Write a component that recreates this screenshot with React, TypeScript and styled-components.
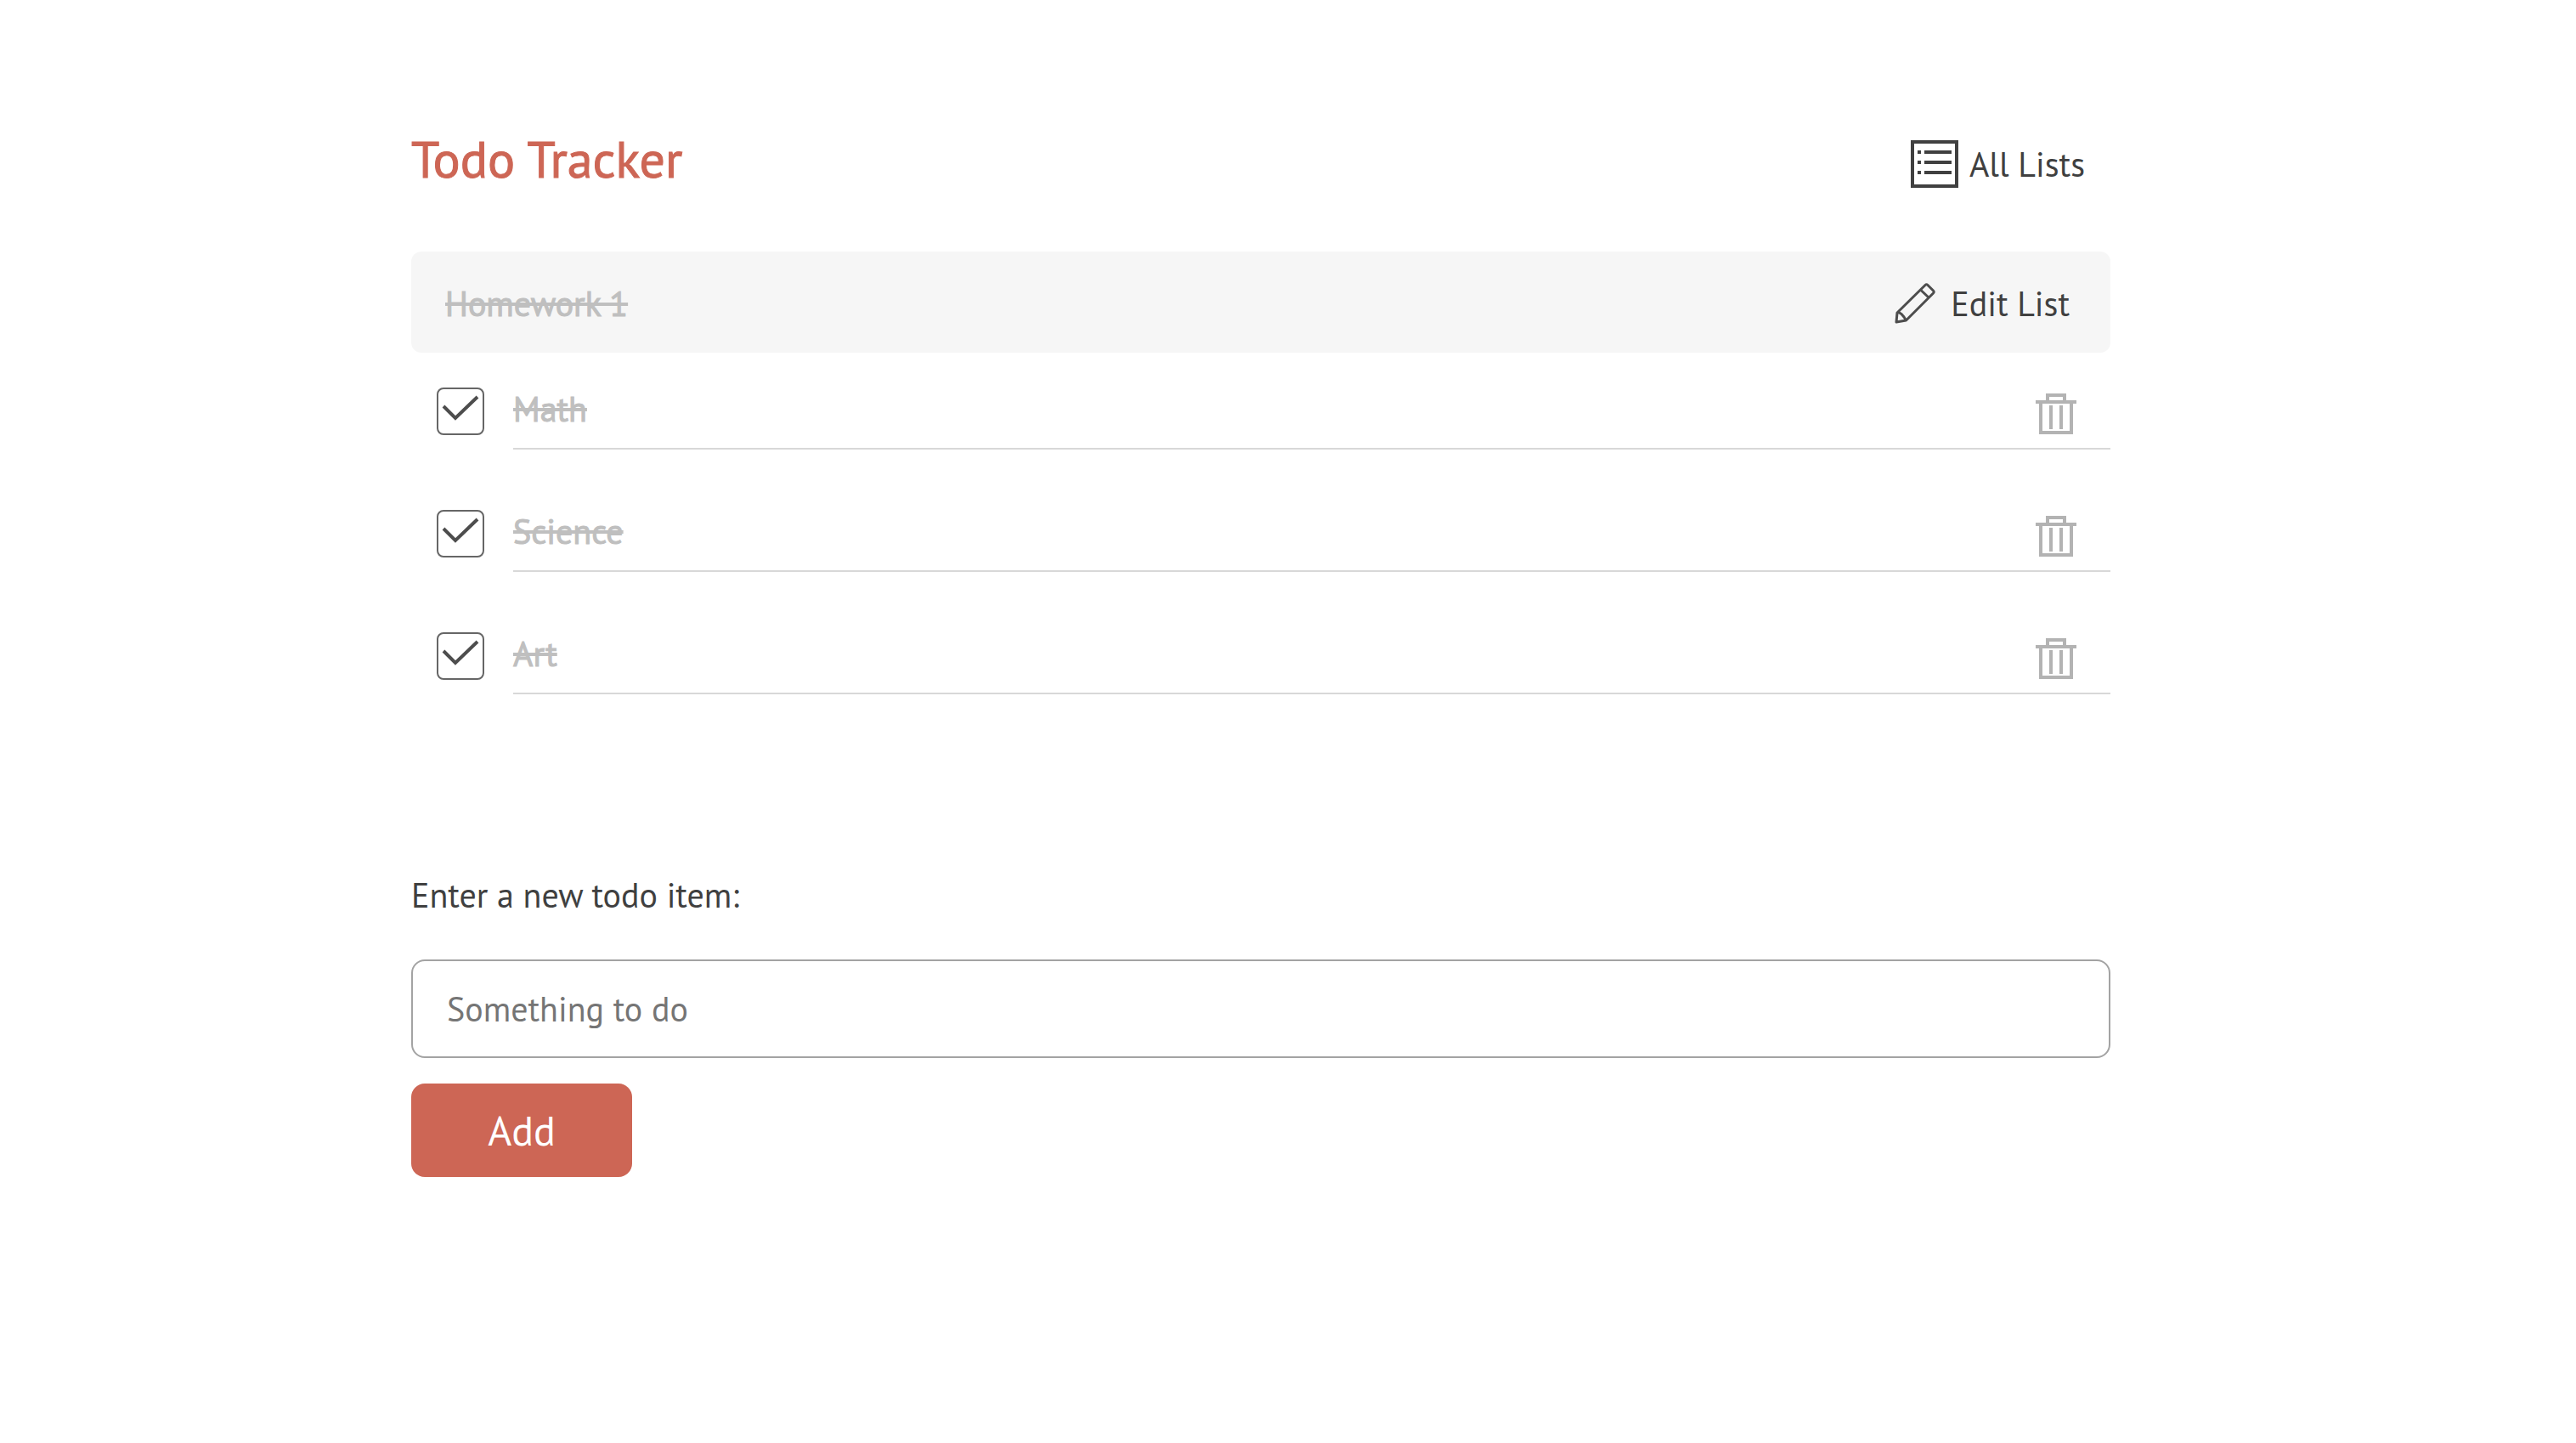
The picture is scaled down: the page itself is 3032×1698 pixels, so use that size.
import React, { useState } from "react";
import styled, { createGlobalStyle } from "styled-components";

const colors = {
  accent: "#cd6655",
  text: "#404040",
  mark: "#4d4d4d",
  done: "#bfbfbf",
  trash: "#b3b3b3",
  line: "#d8d8d8",
  panel: "#f6f6f6",
};

const GlobalStyle = createGlobalStyle`
  *, *::before, *::after { box-sizing: border-box; }
  body {
    margin: 0;
    background: #fff;
    color: ${colors.text};
    font-family: "PT Sans", Lato, "Open Sans", sans-serif;
    font-size: 40px;
    line-height: 56px;
  }
  button, input { font: inherit; color: inherit; }
`;

const Page = styled.div`
  padding: 144px 96px 96px 32px;
`;

const Content = styled.main`
  max-width: 2000px;
  margin: 0 auto;
`;

const Header = styled.header`
  display: flex;
  align-items: center;
  justify-content: space-between;
  height: 98px;
  margin-bottom: 54px;
  padding-right: 30px;
`;

const Title = styled.h1`
  margin: 0;
  padding-bottom: 12px;
  font-size: 60px;
  line-height: 80px;
  font-weight: 500;
  color: ${colors.accent};
  -webkit-text-stroke: 1px currentColor;
`;

const IconLink = styled.a<{ $gap: number }>`
  display: flex;
  align-items: center;
  gap: ${(p) => p.$gap}px;
  color: ${colors.text};
  text-decoration: none;
`;

const Icon = styled.svg<{ $size: number }>`
  display: block;
  flex: none;
  width: ${(p) => p.$size}px;
  height: ${(p) => p.$size}px;
  fill: none;
  stroke: currentColor;
  stroke-width: 4;
`;

const ListBar = styled.section`
  display: flex;
  align-items: center;
  justify-content: space-between;
  height: 119px;
  padding: 3px 48px 0 40px;
  border-radius: 12px;
  background: ${colors.panel};
`;

const ListName = styled.h2<{ $done: boolean }>`
  margin: 0;
  font-size: 40px;
  font-weight: 500;
  color: ${(p) => (p.$done ? colors.done : colors.text)};
  text-decoration: ${(p) => (p.$done ? "line-through 4px" : "none")};
  -webkit-text-stroke: ${(p) => (p.$done ? "1px currentColor" : "0")};
`;

const Items = styled.ul`
  display: flex;
  flex-direction: column;
  gap: 32px;
  margin: 0;
  padding: 2px 0 0 30px;
  list-style: none;
`;

const Item = styled.li`
  display: flex;
  align-items: flex-end;
  gap: 34px;
`;

const CheckSlot = styled.span`
  display: grid;
  padding-bottom: 17px;
  > * { grid-area: 1 / 1; }
`;

const CheckBox = styled.input`
  appearance: none;
  width: 56px;
  height: 56px;
  margin: 0;
  border: 2px solid #666;
  border-radius: 8px;
  background: #fff;
`;

const CheckMark = styled(Icon)`
  color: ${colors.mark};
  pointer-events: none;
  ${CheckBox}:not(:checked) + & { visibility: hidden; }
`;

const ItemBody = styled.div`
  display: flex;
  flex: 1;
  align-items: flex-end;
  justify-content: space-between;
  height: 112px;
  padding: 0 40px 16px 0;
  border-bottom: 2px solid ${colors.line};
`;

const ItemLabel = styled.label<{ $done: boolean }>`
  padding-bottom: 2px;
  font-weight: 500;
  color: ${(p) => (p.$done ? colors.done : colors.text)};
  text-decoration: ${(p) => (p.$done ? "line-through 4px" : "none")};
  -webkit-text-stroke: ${(p) => (p.$done ? "1px currentColor" : "0")};
`;

const DeleteButton = styled.button`
  padding: 0;
  border: 0;
  background: none;
  color: ${colors.trash};
  cursor: pointer;
`;

const Form = styled.form`
  display: flex;
  flex-direction: column;
  align-items: flex-start;
  padding-top: 208px;
`;

const FieldLabel = styled.label`
  margin-bottom: 48px;
`;

const Field = styled.input`
  width: 100%;
  height: 116px;
  margin-bottom: 30px;
  padding: 0 40px;
  border: 2px solid #a3a3a3;
  border-radius: 16px;
  background: #fff;
  &::placeholder { color: #757575; opacity: 1; }
`;

const AddButton = styled.button`
  width: 260px;
  height: 110px;
  padding: 0;
  border: 0;
  border-radius: 16px;
  background: ${colors.accent};
  color: #fff;
  font-size: 48px;
  cursor: pointer;
`;

const ListIcon = () => (
  <Icon $size={56} viewBox="0 0 56 56" aria-hidden="true">
    <path d="M2 2H54V54H2Z M8 14H12 M16 14H48 M8 26H12 M16 26H48 M8 38H12 M16 38H48" />
  </Icon>
);

const PencilIcon = () => (
  <Icon $size={48} viewBox="0 0 48 48" strokeLinejoin="round" aria-hidden="true">
    <path
      stroke={colors.mark}
      strokeWidth="3"
      d="M2 46L3 35L36 2.5Q37.500 1 39 2.500L45.500 9Q47 10.500 45.500 12L13.500 44Z M30.500 8L40.500 17.500 M4 34L8 36.500L11 40L13.500 44"
    />
  </Icon>
);

const TrashIcon = () => (
  <Icon $size={48} viewBox="0 0 48 48" aria-hidden="true">
    <path d="M0 10H48 M14 10V2H34V10 M6 10V46H42V10 M18 14V42 M30 14V42" />
  </Icon>
);

type Todo = { id: number; name: string; done: boolean };

const initialTodos: Todo[] = [
  { id: 1, name: "Math", done: true },
  { id: 2, name: "Science", done: true },
  { id: 3, name: "Art", done: true },
];

export default function App() {
  const [todos, setTodos] = useState(initialTodos);
  const [draft, setDraft] = useState("");

  const toggle = (id: number) =>
    setTodos(todos.map((t) => (t.id === id ? { ...t, done: !t.done } : t)));
  const remove = (id: number) => setTodos(todos.filter((t) => t.id !== id));
  const add = (e: React.FormEvent) => {
    e.preventDefault();
    const name = draft.trim();
    if (!name) return;
    setTodos([...todos, { id: Date.now(), name, done: false }]);
    setDraft("");
  };

  return (
    <Page>
      <GlobalStyle />
      <Content>
        <Header>
          <Title>Todo Tracker</Title>
          <IconLink href="#lists" $gap={13}>
            <ListIcon />
            All Lists
          </IconLink>
        </Header>
        <ListBar>
          <ListName $done={todos.every((t) => t.done)}>Homework 1</ListName>
          <IconLink href="#edit" $gap={18}>
            <PencilIcon />
            Edit List
          </IconLink>
        </ListBar>
        <Items>
          {todos.map((todo) => (
            <Item key={todo.id}>
              <CheckSlot>
                <CheckBox
                  type="checkbox"
                  id={`todo-${todo.id}`}
                  checked={todo.done}
                  onChange={() => toggle(todo.id)}
                />
                <CheckMark $size={56} viewBox="0 0 56 56" aria-hidden="true">
                  <path d="M8 22L22 36L48 11" />
                </CheckMark>
              </CheckSlot>
              <ItemBody>
                <ItemLabel htmlFor={`todo-${todo.id}`} $done={todo.done}>
                  {todo.name}
                </ItemLabel>
                <DeleteButton aria-label={`Delete ${todo.name}`} onClick={() => remove(todo.id)}>
                  <TrashIcon />
                </DeleteButton>
              </ItemBody>
            </Item>
          ))}
        </Items>
        <Form onSubmit={add}>
          <FieldLabel htmlFor="new-todo">Enter a new todo item:</FieldLabel>
          <Field
            id="new-todo"
            type="text"
            placeholder="Something to do"
            value={draft}
            onChange={(e) => setDraft(e.target.value)}
          />
          <AddButton type="submit">Add</AddButton>
        </Form>
      </Content>
    </Page>
  );
}
